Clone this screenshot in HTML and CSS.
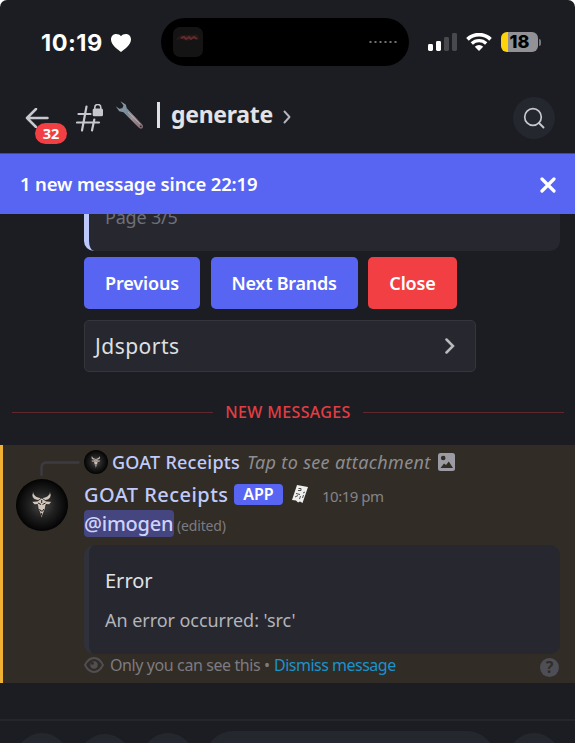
FILE: index.html
```
<!DOCTYPE html>
<html lang="en">
<head>
<meta charset="utf-8">
<title>generate</title>
<link rel="stylesheet" href="styles.css">
</head>
<body>
<svg class="defs" aria-hidden="true">
  <defs>
    <radialGradient id="glow"><stop offset="0" stop-color="#4a4a4a"/><stop offset=".5" stop-color="#202020"/><stop offset="1" stop-color="#030303"/></radialGradient>
    <linearGradient id="steel" x1="0" y1="0" x2="1" y2="1"><stop offset="0" stop-color="#8ba0ad"/><stop offset=".45" stop-color="#788a96"/><stop offset=".6" stop-color="#a08f95"/><stop offset="1" stop-color="#83686c"/></linearGradient>
    <symbol id="goat" viewBox="0 0 52 52">
      <circle cx="26" cy="26" r="26" fill="url(#glow)"/>
      <g fill="#cfc5bc" stroke="#15110f" stroke-width=".7" stroke-linejoin="round">
        <path d="M22 21.500C16 20.500 14.500 16 17.700 12.500C17.500 16 19.500 17.500 23.500 18.500L25.500 19.500L27.500 18.500C31.500 17.500 33.800 16 33.500 12.500C36.500 16 35 20.500 29.500 21.500Z"/>
        <path d="M21.500 22L15.500 22.500L18.500 25.800L21.500 25.500L22.200 30L24 34L25.500 39.500L27.500 34L29.200 30L30 25.500L33 25.800L36 22.500L30 22L25.700 19Z"/>
      </g>
      <path d="M22 24l3 1.500M29.500 24l-3 1.500M25.700 21v3M23.500 30l1.200 2h2l1.200-2M25.600 34v2.500" fill="none" stroke="#28211e" stroke-width="1"/>
    </symbol>
  </defs>
</svg>
<div class="screen">
  <header class="top">
    <div class="status">
      <div class="clock"><span class="time">10:19</span>
        <svg class="heart" width="20" height="18" viewBox="0 0 20 18"><path d="M10 18C7 15.500 0 11 0 5.500C0 2.200 2.300 0 5 0C7.300 0 9 .8 10 2.200C11 .8 12.700 0 15 0C17.700 0 20 2.200 20 5.500C20 11 13 15.500 10 18Z" fill="#fff"/></svg>
      </div>
      <div class="island">
        <svg width="30" height="30" viewBox="0 0 30 30"><rect width="30" height="30" rx="7" fill="#141414"/><path d="M3 13Q5 8 12 8L24 7.500Q27 11 26 13L20 12L14 14L9 12Z" fill="#29171a"/><path d="M8 11l3-1 2 2 3-2 2 2 3-2 3 2" fill="none" stroke="#7d3532" stroke-width="2" opacity=".7"/></svg>
        <svg class="dots" width="28" height="4" viewBox="0 0 28 4"><path d="M.5 2H28" stroke="#77706c" stroke-width="2" stroke-dasharray="2 3"/></svg>
      </div>
      <div class="sys">
        <svg width="29" height="18" viewBox="0 0 29 18"><rect y="11" width="5" height="7" rx="1.400" fill="#fff"/><rect x="8" y="8" width="5" height="10" rx="1.400" fill="#fff"/><rect x="16" y="4" width="5" height="14" rx="1.400" fill="#48494d"/><rect x="24" width="5" height="18" rx="1.400" fill="#48494d"/></svg>
        <svg width="26" height="18" viewBox="0 0 26 18"><path d="M1.500 6.300A16.500 16.500 0 0 1 24.500 6.300" fill="none" stroke="#fff" stroke-width="3.700"/><path d="M5.800 10.500A10.400 10.400 0 0 1 20.200 10.500" fill="none" stroke="#fff" stroke-width="3.300"/><path d="M13 18L8.800 13.800A6 6 0 0 1 17.200 13.800Z" fill="#fff"/></svg>
        <div class="battery"><span class="cell">18</span><span class="nub"></span></div>
      </div>
    </div>
    <div class="channel">
      <div class="back">
        <svg width="24" height="20" viewBox="0 0 24 20"><path d="M22.500 10H2M11 1L2 10L11 19" fill="none" stroke="#c7c8ce" stroke-width="2.500" stroke-linecap="round" stroke-linejoin="round"/></svg>
        <span class="count">32</span>
      </div>
      <svg class="hash" width="28" height="28" viewBox="0 0 28 28"><path d="M10.500 2.500L6 26.500M18.300 15.500L16 26.500M2.500 10H14.500M1 18.500H23" fill="none" stroke="#c7c8ce" stroke-width="2.200" stroke-linecap="round"/><path d="M18.800 5V3.500a3 3 0 0 1 6 0V5" fill="none" stroke="#c7c8ce" stroke-width="1.600"/><rect x="16.700" y="4.500" width="10.300" height="7.700" rx="1.500" fill="#c7c8ce"/></svg>
      <svg class="wrench" width="30" height="30" viewBox="0 0 30 30"><path d="M5.500 1.200L10.700 4.400L11.800 8.300L27 24.200Q29 26 27.600 28Q25.500 29.500 23.600 27.600L8.500 12.300L4.200 11.200L.8 6.200L4.300 8.800L7.300 8.200L8.500 5.500Z" fill="url(#steel)"/><circle cx="25.800" cy="26.300" r=".9" fill="#28262b"/><path d="M13 12L25 24" stroke="#b7b2ba" stroke-width=".8"/></svg>
      <span class="bar"></span>
      <span class="name">generate</span>
      <svg class="chev" width="8" height="14" viewBox="0 0 8 14"><path d="M1.500 1.500L6.500 7L1.500 12.500" fill="none" stroke="#b4b6bd" stroke-width="1.900" stroke-linecap="round" stroke-linejoin="round"/></svg>
      <div class="search"><svg width="22" height="22" viewBox="0 0 22 22"><circle cx="10" cy="10" r="8.300" fill="none" stroke="#c7c8ce" stroke-width="1.700"/><path d="M16 16L20.500 20.500" stroke="#c7c8ce" stroke-width="1.900" stroke-linecap="round"/></svg></div>
    </div>
  </header>

  <div class="banner"><span>1 new message since 22:19</span>
    <svg width="16" height="16" viewBox="0 0 16 16"><path d="M2 2L14 14M14 2L2 14" stroke="#fff" stroke-width="3.200" stroke-linecap="round"/></svg>
  </div>

  <section class="previous">
    <div class="embed page"><span>Page 3/5</span></div>
    <div class="buttons"><button class="btn prev">Previous</button><button class="btn next">Next Brands</button><button class="btn close">Close</button></div>
    <div class="select"><span>Jdsports</span><svg width="10" height="16" viewBox="0 0 10 16"><path d="M1.500 1.500L8 8L1.500 14.500" fill="none" stroke="#b9babe" stroke-width="2.500" stroke-linecap="round"/></svg></div>
  </section>

  <div class="divider"><span>NEW MESSAGES</span></div>

  <article class="message">
    <div class="side">
      <svg width="40" height="15" viewBox="0 0 40 15"><path d="M1.500 14V6.500Q1.500 1.500 6.500 1.500H38.500" fill="none" stroke="#3c3b42" stroke-width="2.400" stroke-linecap="round"/></svg>
      <svg class="avatar" width="52" height="52"><use href="#goat"/></svg>
    </div>
    <div class="content">
      <div class="reply"><svg width="24" height="24"><use href="#goat"/></svg><b>GOAT Receipts</b><i>Tap to see attachment</i>
        <svg class="pic" width="17" height="18" viewBox="0 0 17 18"><rect width="17" height="18" rx="2.500" fill="#9c9ba3"/><circle cx="5.200" cy="5" r="2.300" fill="#312c25"/><path d="M2.500 15L6 10.500L8 12L10.800 8.500L15 15Z" fill="#312c25"/></svg>
      </div>
      <div class="author"><b>GOAT Receipts</b><span class="app">APP</span>
        <svg width="18" height="20" viewBox="0 0 18 20"><path d="M6 1L17 3L11.500 19L9 17.500L7 18.500L5 16.500L1 16Z" fill="#eeeeed"/><path d="M7.500 4.500h2.500v2H7M5 9.500l4 1M4 13l3-1.500M9.500 12l-1 3M12 9l2-1M11.500 14l1-3" fill="none" stroke="#4f4f50" stroke-width="1"/></svg>
        <time>10:19 pm</time>
      </div>
      <div class="mention"><span>@imogen</span><small>(edited)</small></div>
      <div class="embed error"><h2>Error</h2><p>An error occurred: 'src'</p></div>
      <div class="note">
        <svg width="20" height="16" viewBox="0 0 20 16"><path d="M1 8Q4.500 1 10 1T19 8Q15.500 15 10 15T1 8Z" fill="none" stroke="#514f54" stroke-width="1.800"/><circle cx="10" cy="8" r="3.700" fill="#514f54"/><circle cx="8.400" cy="6.300" r="1.500" fill="#312c25"/></svg>
        <span>Only you can see this •</span><a>Dismiss message</a><span class="help">?</span>
      </div>
    </div>
  </article>

  <footer class="composer"><i class="round"></i><i class="round low"></i><i class="round"></i><i class="field"></i><i class="round"></i></footer>
</div>
</body>
</html>
```

FILE: styles.css
```
* { box-sizing: border-box; }
html { background: #fff; }
body { margin: 0; font-family: "Noto Sans", sans-serif; overflow: hidden; }
svg { display: block; flex: none; }
.defs { position: absolute; width: 0; height: 0; }
.screen { width: 575px; height: 743px; background: #1c1d22; border-radius: 7px 7px 0 0; overflow: hidden; white-space: nowrap; display: flex; flex-direction: column; }
.screen > * { flex: none; }

.top { height: 154px; padding-top: 18px; border-bottom: 1px solid #44469a; }
.status { display: flex; align-items: center; height: 48px; padding-left: 41px; }
.clock { display: flex; align-items: center; width: 120px; gap: 6px; }
.time { font: 700 23.500px/30px Inter, sans-serif; letter-spacing: .5px; width: 64px; margin-top: 2px; color: #fff; }
.heart { margin-top: 1px; }
.island { width: 248px; height: 48px; border-radius: 24px; background: #000; display: flex; align-items: center; justify-content: space-between; padding: 0 12px; }
.sys { display: flex; align-items: center; margin-left: 19px; gap: 9px; }
.battery { display: flex; align-items: center; gap: 1px; }
.cell { width: 37px; height: 20px; border-radius: 6px; background: linear-gradient(90deg, #fdd40b 7px, #919196 7px); font: 800 18px/20px Inter, sans-serif; color: #000; text-align: center; }
.nub { width: 2px; height: 7px; border-radius: 0 2px 2px 0; background: #77787c; }

.channel { display: flex; align-items: center; height: 42px; margin-top: 31px; padding-left: 25px; }
.back { position: relative; width: 51px; }
.count { position: absolute; left: 10px; top: 15px; width: 32px; height: 21px; border-radius: 11px; background: #f23f43; color: #fff; font-weight: 700; font-size: 14.500px; line-height: 21px; text-align: center; }
.wrench { margin: -6px 0 0 11px; }
.bar { width: 3px; height: 26px; background: #dfe0e4; margin: -6px 0 0 12px; }
.name { font-weight: 700; font-size: 23px; line-height: 32px; letter-spacing: -.3px; color: #e2e3e7; width: 102px; margin: -8px 0 0 11px; }
.chev { margin-left: 10px; margin-top: -3px; }
.search { width: 42px; height: 42px; border-radius: 50%; background: #25272f; margin-left: auto; margin-right: 20px; margin-top: -1px; display: flex; align-items: center; justify-content: center; }

.banner { height: 60px; background: #5865f2; color: #fff; display: flex; align-items: center; justify-content: space-between; padding: 0 19px 0 20px; font-weight: 600; font-size: 18.500px; letter-spacing: -.15px; }
.banner span { margin-top: -2px; }
.banner svg { margin-top: 2px; }

.embed { background: #27272f; border-radius: 10px; width: 476px; border-left: 5px solid #31313b; }
.previous { padding-left: 84px; height: 158px; }
.page { height: 37px; border-radius: 0 0 10px 10px; border-left-color: #bcc8fb; overflow: hidden; padding-left: 16px; color: #6f7078; font-size: 18px; line-height: 24px; letter-spacing: -.2px; }
.page span { display: block; margin-top: -9px; }
.buttons { display: flex; gap: 10.500px; margin-top: 6px; }
.btn { border: 0; padding: 0; height: 52px; border-radius: 5px; background: #5865f2; color: #fff; font: 600 18px/52px "Noto Sans", sans-serif; letter-spacing: -.15px; }
.prev { width: 116px; }
.next { width: 147px; letter-spacing: -.25px; }
.close { width: 89px; background: #f23f43; }
.select { width: 392px; height: 52px; margin-top: 11px; border: 1px solid #34353d; border-radius: 5px; background: #27272f; display: flex; align-items: center; justify-content: space-between; padding: 0 20px 0 10px; color: #dfe0e3; font-size: 21px; letter-spacing: .5px; }

.divider { height: 73px; display: flex; align-items: center; padding: 7px 11px 0 12px; gap: 12px; color: #e33d43; font-size: 16px; font-weight: 500; letter-spacing: .35px; }
.divider::before, .divider::after { content: ""; height: 1px; flex: 1; background: #60272d; }

.message { height: 238px; background: #312c25; border-left: 3px solid #f0b232; display: flex; }
.side { width: 81px; padding: 16px 0 0 13px; }
.side > svg:first-child { margin-left: 24px; }
.avatar { margin-top: 3px; }
.content { width: 476px; padding-top: 5px; }
.reply { height: 24px; display: flex; align-items: center; color: #c0cbfb; font-size: 18px; }
.reply b { font-weight: 500; letter-spacing: .25px; margin-left: 4px; width: 135px; }
.reply i { color: #8e8c90; width: 185px; letter-spacing: .35px; }
.pic { margin-left: 6px; }
.author { height: 36px; margin-top: 2px; display: flex; align-items: center; color: #c0cbfb; }
.author b { font-weight: 500; font-size: 20px; letter-spacing: .45px; width: 150px; }
.app { width: 49px; height: 21px; border-radius: 4px; background: #5865f2; color: #fff; font-weight: 600; font-size: 16px; line-height: 21px; text-align: center; margin-right: 8px; }
.author time { color: #85838a; font-size: 15px; letter-spacing: -.5px; margin: 3px 0 0 13px; }
.mention { height: 27px; margin-top: -2px; display: flex; align-items: center; }
.mention span { width: 90px; height: 27px; background: #454580; border-radius: 4px; color: #cdd3fb; font-weight: 500; font-size: 20px; line-height: 27px; letter-spacing: -.25px; }
.mention small { color: #7d7b82; font-size: 14px; margin: 4px 0 0 3px; letter-spacing: -.15px; }
.error { height: 109px; margin-top: 8px; padding: 21px 0 0 16px; }
h2 { margin: 0; font-weight: 400; font-size: 20px; line-height: 30px; color: #e1e2e5; }
p { margin: 11px 0 0; font-size: 18px; line-height: 26px; letter-spacing: -.05px; color: #b3b4ba; }
.note { height: 22px; display: flex; align-items: center; font-size: 16px; color: #7d7b82; }
.note span { letter-spacing: -.4px; width: 164px; margin-left: 6px; }
.note a { color: #1893ce; letter-spacing: -.5px; }
.note .help { width: 19px; height: 19px; margin: 5px 1px 0 auto; border-radius: 50%; background: #4e4e56; color: #312c25; font-weight: 700; font-size: 16px; line-height: 19px; text-align: center; letter-spacing: 0; }

.composer { margin-top: 36px; height: 24px; border-top: 2px solid #25262c; display: flex; align-items: flex-start; padding: 12px 0 0 16px; overflow: hidden; }
.round { width: 52px; height: 52px; border-radius: 50%; background: #25272f; margin-right: 11px; flex: none; }
.low { margin-top: 1px; }
.field { width: 290px; height: 56px; border-radius: 28px; background: #25272f; margin: -2px 13px 0 0; flex: none; }
```
